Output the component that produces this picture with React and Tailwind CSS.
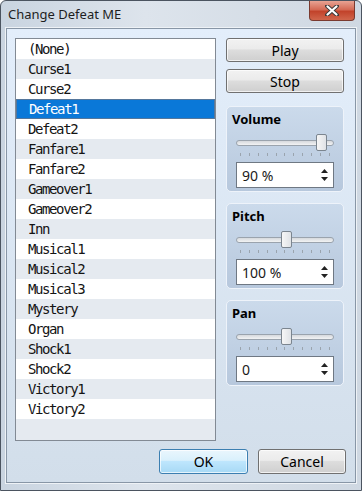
import React from "react";

const tracks = [
  "(None)", "Curse1", "Curse2", "Defeat1", "Defeat2", "Fanfare1", "Fanfare2",
  "Gameover1", "Gameover2", "Inn", "Musical1", "Musical2", "Musical3",
  "Mystery", "Organ", "Shock1", "Shock2", "Victory1", "Victory2",
];

const ui = { fontFamily: '"Noto Sans", "Open Sans", sans-serif' };
const mono = { fontFamily: '"DejaVu Sans Mono", "Liberation Mono", monospace' };

function Button({ children, primary, className = "" }) {
  return (
    <div
      className={`flex items-center justify-center rounded-[3px] border text-[14px] text-black ${
        primary
          ? "border-[#3c7fb1] bg-[linear-gradient(#eaf6fd_0%,#d9f0fc_45%,#bee6fd_50%,#a7d9f5_100%)]"
          : "border-[#707070] bg-[linear-gradient(#f2f2f2_0%,#ebebeb_45%,#dddddd_50%,#cfcfcf_100%)]"
      } shadow-[inset_0_0_0_1px_rgba(255,255,255,0.7)] ${className}`}
      style={ui}
    >
      {children}
    </div>
  );
}

function Slider({ pos }) {
  return (
    <div className="relative mx-[1px] h-[24px]">
      <div className="absolute left-[0px] right-[0px] top-[7px] h-[6px] rounded-full border border-[#9aa3ad] bg-[linear-gradient(#d6d9dd,#f2f3f4)]" />
      <div
        className="absolute top-[1px] h-[17px] w-[11px] rounded-[2px] border border-[#7b858f] bg-[linear-gradient(90deg,#f6f6f6,#dfe2e6)]"
        style={{ left: `${pos}px` }}
      />
      <div className="absolute left-[4px] right-[4px] top-[20px] flex justify-between">
        {Array.from({ length: 11 }).map((_, i) => (
          <div key={i} className="h-[3px] w-[1px] bg-[#9aa4ae]" />
        ))}
      </div>
    </div>
  );
}

function Spin({ value }) {
  return (
    <div className="mx-[9px] flex h-[26px] items-center justify-between border border-[#6f7883] bg-white pl-[5px] pr-[5px]">
      <span className="text-[14px] text-[#1a1a1a]" style={ui}>{value}</span>
      <svg width="7" height="14" viewBox="0 0 7 14">
        <path d="M3.5 1 L7 5 L0 5 Z" fill="#222" />
        <path d="M0 9 L7 9 L3.5 13 Z" fill="#222" />
      </svg>
    </div>
  );
}

function Group({ title, pos, value }) {
  return (
    <div className="h-[86px] rounded-[5px] border border-[#eef3fa] bg-[linear-gradient(#cbdaeb,#b7c8dd)] pt-[3px]">
      <div className="pl-[5px] text-[13px] font-bold leading-[18px] text-black" style={ui}>
        {title}
      </div>
      <div className="mt-[5px] px-[8px]">
        <Slider pos={pos} />
      </div>
      <div className="mt-[5px]">
        <Spin value={value} />
      </div>
    </div>
  );
}

export default function App() {
  return (
    <div className="relative h-[491px] w-[362px] overflow-hidden rounded-t-[6px] border border-[#4b5460] bg-[linear-gradient(90deg,#c9d4e0,#dde4ec_40%,#cfd8e2)]">
      <div className="flex h-[27px] items-center justify-between pl-[7px]">
        <span className="text-[13px] text-[#1e1e1e]" style={ui}>Change Defeat ME</span>
        <div className="mr-[6px] flex h-[20px] w-[46px] items-center justify-center self-start rounded-b-[4px] border border-t-0 border-[#7a3a2f] bg-[linear-gradient(#e8a393,#d46a55_45%,#c2432b_55%,#d0664c)]">
          <svg width="14" height="11" viewBox="0 0 14 11">
            <path d="M2 1 L12 10 M12 1 L2 10" stroke="#3a3a3a" strokeWidth="4" strokeLinecap="round" fill="none" />
            <path d="M2.5 1.5 L11.5 9.5 M11.5 1.5 L2.5 9.5" stroke="#ffffff" strokeWidth="2.2" strokeLinecap="round" fill="none" />
          </svg>
        </div>
      </div>
      <div className="mx-[5px] h-[455px] border border-[#8896a6] bg-[linear-gradient(#e3eefb,#d2deea)] px-[8px] pt-[9px] shadow-[0_0_0_1px_#eef2f6]">
        <div className="flex gap-[10px]">
          <div className="h-[403px] w-[201px] border border-[#828a94] bg-[#e5eaf0]">
            {tracks.map((t, i) => {
              const sel = t === "Defeat1";
              return (
                <div
                  key={t}
                  className={`flex h-[20px] items-center pl-[12px] text-[14px] tracking-[-1.4px] ${
                    sel
                      ? "border border-[#55779c] bg-[#0a78d8] pl-[11px] text-white"
                      : i % 2 === 0
                      ? "bg-white text-[#141414]"
                      : "bg-[#e5eaf0] text-[#141414]"
                  }`}
                  style={mono}
                >
                  {t}
                </div>
              );
            })}
          </div>
          <div className="flex w-[118px] flex-col">
            <Button className="mt-[0px] h-[24px]">Play</Button>
            <Button className="mt-[7px] h-[24px]">Stop</Button>
            <div className="mt-[13px] flex flex-col gap-[11px]">
              <Group title="Volume" pos={80} value="90 %" />
              <Group title="Pitch" pos={45} value="100 %" />
              <Group title="Pan" pos={45} value="0" />
            </div>
          </div>
        </div>
        <div className="mt-[8px] flex justify-end gap-[10px] pr-[1px]">
          <Button primary className="h-[25px] w-[89px]">OK</Button>
          <Button className="h-[25px] w-[88px]">Cancel</Button>
        </div>
      </div>
    </div>
  );
}
